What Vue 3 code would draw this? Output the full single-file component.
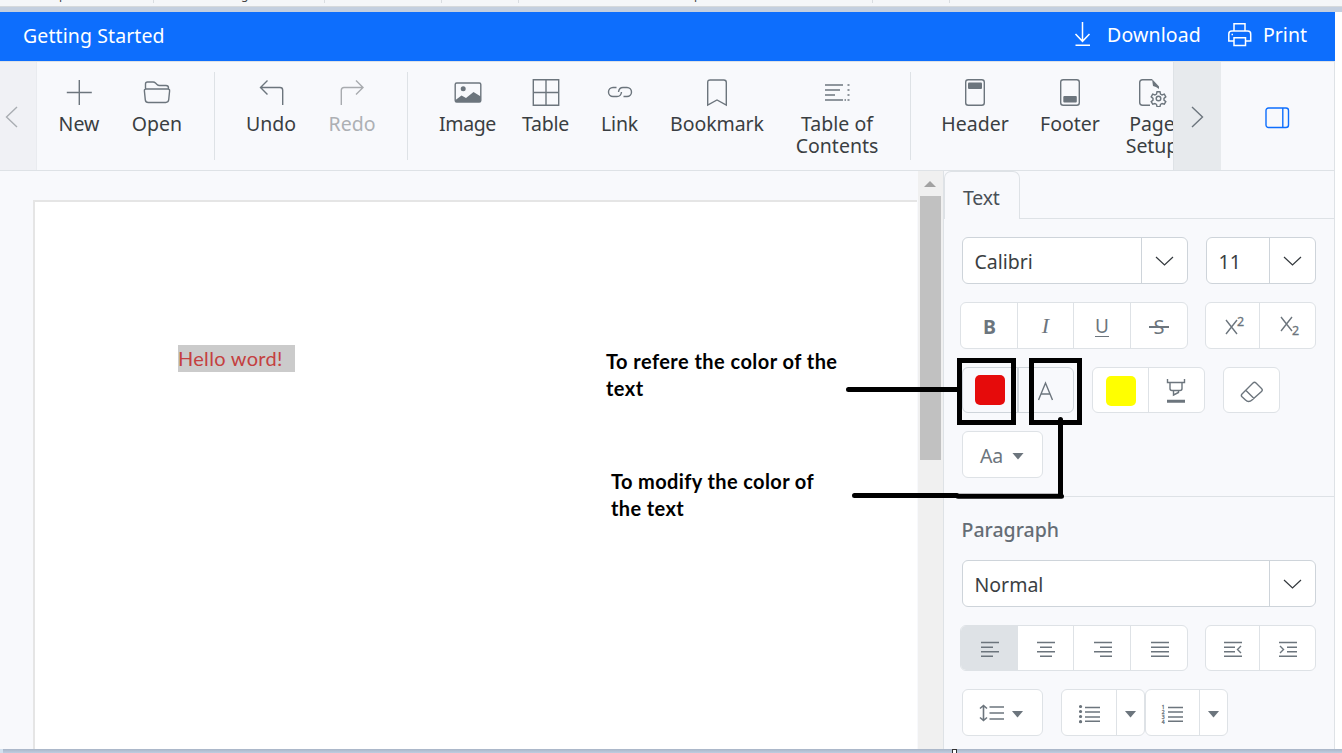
<script setup>
const g = '#6c757d'
const tools = [
  [
    { t: ['New'], w: 76, ls: 0, i: '<path d="M15.3 3v25M2.8 15.5h25"/>' },
    { t: ['Open'], w: 80, ls: 0, i: '<path d="M3.5 12V7q0-2 2-2H11q1.500 0 2.500 1l1.500 1.500q1 1 2.500 1H24q2.500 0 2.500 2.500v1M4 12h22q1.800 0 1.600 2l-.9 8.800q-.3 2.700-3 2.700H6.300q-2.700 0-3-2.700L2.400 14q-.2-2 1.600-2z"/>' },
  ],
  [
    { t: ['Undo'], w: 80, ls: 0, i: '<path d="M11.500 3.500L4.500 10.500l7 7M4.500 10.500H24q2.700 0 2.700 2.700V28"/>' },
    { t: ['Redo'], w: 82, ls: 0, off: true, i: '<path d="M19 3.500l7 7-7 7M26 10.500H7q-2.700 0-2.700 2.700V28"/>' },
  ],
  [
    { t: ['Image'], w: 87, ls: -0.4, i: `<rect x="2.200" y="6" width="25.600" height="19" rx="1.500"/><circle cx="10.200" cy="11.700" r="2.500" fill="${g}" stroke="none"/><path d="M2.500 23l6-4.500 4.500 2.500 7.500-6 7.300 4.500V25H2.500z" fill="${g}" stroke="none"/>` },
    { t: ['Table'], w: 69, ls: -0.2, i: '<path d="M2.300 2.800h25.400v25.400H2.300zM15 2.800v25.400M2.300 15.500h25.400"/>' },
    { t: ['Link'], w: 79, ls: -0.2, i: '<path d="M11.500 10.500H8a4.500 4.500 0 0 0 0 9h4q4 0 4.500-4.500M18.500 19.500h3.500a4.500 4.500 0 0 0 0-9h-4q-4 0-4.500 4.500"/>' },
    { t: ['Bookmark'], w: 116, ls: -0.05, i: '<path d="M5.700 28V5.500q0-2.500 2.500-2.500h13.600q2.500 0 2.500 2.500V28l-9.300-5z"/>' },
    { t: ['Table of', 'Contents'], w: 124, ls: 0, i: '<path d="M3 8h18M3 13h15M3 18h10M3 23h18M22.500 23h1.500M25.500 8h2M25.500 13h2M25.500 18h2M25.500 23h2" stroke-width="1.700"/>' },
  ],
  [
    { t: ['Header'], w: 96, ls: 0, i: `<rect x="5.700" y="2.700" width="18.600" height="25.600" rx="2.500"/><rect x="8" y="5.500" width="14" height="6.500" rx="1" fill="${g}" stroke="none"/>` },
    { t: ['Footer'], w: 94, ls: 0, i: `<rect x="5.700" y="2.700" width="18.600" height="25.600" rx="2.500"/><rect x="8.300" y="19" width="13.500" height="6.500" rx="1" fill="${g}" stroke="none"/>` },
    { t: ['Page', 'Setup'], w: 70, ls: -0.1, i: `<path d="M15 2.800H5.500Q2.700 2.800 2.700 5.500v20q0 2.700 2.800 2.700H13"/><path d="M15 2l7 7.500v2.500q-3-2.500-6-3z" fill="${g}" stroke="none"/><circle cx="21.500" cy="21.500" r="2.300"/><path d="M20 14.800h3l.5 2.300 1.600.9 2.200-.8 1.500 2.600-1.800 1.600v1.700l1.800 1.500-1.500 2.600-2.200-.7-1.600.9-.5 2.200h-3l-.5-2.200-1.600-.9-2.200.7-1.500-2.600 1.800-1.500v-1.700l-1.800-1.600 1.500-2.600 2.200.8 1.600-.9z"/>` },
  ],
]
const aligns = [
  'M1 1.500h18M1 6.200h12M1 10.700h18M1 15.200h12',
  'M1 1.500h18M4 6.200h12M1 10.700h18M4 15.200h12',
  'M1 1.500h18M7 6.200h12M1 10.700h18M7 15.200h12',
  'M1 1.500h18M1 6.200h18M1 10.700h18M1 15.200h18',
]
const marks = [153, 324, 441, 518, 872, 949]
</script>

<template>
  <div class="screen">
    <div class="strip">
      <i v-for="m in marks" :key="m" class="tick" :style="{ left: m + 'px' }"></i>
      <span class="desc d1">p</span>
      <span class="desc d2">g</span>
      <span class="desc d3">p</span>
    </div>
    <div class="band"></div>
    <div class="app">
      <header class="title">
        <span class="name">Getting Started</span>
        <svg class="dl" width="20" height="26" viewBox="0 0 20 26"><path d="M9.500 0v19M2.500 12l7 7.300 7-7.300M2.500 23.300h14.500" /></svg>
        <span class="act download">Download</span>
        <svg class="pr" width="26" height="26" viewBox="0 0 26 26"><path d="M7 9V1.800h11V9M6.500 19H1.800V12q0-3 3-3h15.900q3 0 3 3v7H18.500M7 15.800h11.500v7.700H7zM4.500 12.500h1.500" /></svg>
        <span class="act">Print</span>
      </header>
      <nav class="toolbar">
        <div class="prev"><svg width="14" height="22" viewBox="0 0 14 22"><path d="M12 1L1.500 11 12 21" /></svg></div>
        <div class="tools">
          <div v-for="(grp, n) in tools" :key="n" class="grp">
            <button v-for="b in grp" :key="b.t[0]" class="tool" :class="{ off: b.off }" :style="{ width: b.w + 'px', letterSpacing: b.ls + 'px' }">
              <svg width="30" height="30" viewBox="0 0 30 30" v-html="b.i"></svg>
              <span v-for="l in b.t" :key="l">{{ l }}</span>
            </button>
          </div>
        </div>
        <div class="next"><svg width="14" height="22" viewBox="0 0 14 22"><path d="M2 1l10.500 10L2 21" /></svg></div>
        <div class="pane"><svg width="25" height="22" viewBox="0 0 25 22"><rect x="1" y="1" width="22.500" height="19.500" rx="2.500" /><path d="M17.800 1v19.500" /></svg></div>
      </nav>
      <main class="work">
        <section class="canvas">
          <div class="page"><span class="hello">Hello word!</span></div>
        </section>
        <div class="scroll"><i class="up"></i><i class="thumb"></i></div>
        <aside class="panel">
          <div class="tabs"><div class="tab">Text</div></div>
          <div class="body">
            <div class="row">
              <div class="combo c1"><span>Calibri</span><b><svg width="19" height="11" viewBox="0 0 19 11"><path d="M1 1l8.500 8L18 1" /></svg></b></div>
              <div class="combo c2"><span>11</span><b><svg width="19" height="11" viewBox="0 0 19 11"><path d="M1 1l8.500 8L18 1" /></svg></b></div>
            </div>
            <div class="row wide">
              <div class="group four">
                <button class="bold">B</button><button class="ital">I</button><button class="und"><u>U</u></button>
                <button class="strike"><span>S</span></button>
              </div>
              <div class="group two sup">
                <button><svg width="22" height="22" viewBox="0 0 22 22"><path d="M2 5l11 14M13 5L2 19" /><text x="13" y="10.500">2</text></svg></button>
                <button><svg width="22" height="22" viewBox="0 0 22 22"><path d="M2 2l11 14M13 2L2 16" /><text x="13" y="19.500">2</text></svg></button>
              </div>
            </div>
            <div class="row r3">
              <div class="group font"><button><i class="sw red"></i></button><button class="fa"><svg width="18" height="20" viewBox="0 0 18 20"><path d="M1.500 19L8.500 2 15.500 19M4.300 13h8.500" /></svg></button></div>
              <div class="group hl"><button><i class="sw yellow"></i></button><button><svg class="pen" width="22" height="26" viewBox="0 0 22 26"><path d="M2.500 1v3.500h17V1M5 4.500v6q0 2 2 2h8q2 0 2-2v-6M8.500 12.500V17l5-2.500v-2" /><path d="M2 23.200h18" stroke-width="3" /></svg></button></div>
              <div class="group er"><button><svg class="rub" width="24" height="24" viewBox="0 0 24 24"><path d="M2 14L13 3q1.500-1.500 3 0l5.500 5.500q1.500 1.500 0 3L12 20q-1.500 1.500-3.500 1.500Q7 21.500 5.500 20L2 16.700q-1.300-1.300 0-2.700zM6 10.500l8 8" /></svg></button></div>
            </div>
            <div class="row r4"><div class="group aa"><button><span>Aa</span><i class="car"></i></button></div></div>
          </div>
          <h3>Paragraph</h3>
          <div class="body para">
            <div class="row"><div class="combo c3"><span>Normal</span><b><svg width="19" height="11" viewBox="0 0 19 11"><path d="M1 1l8.500 8L18 1" /></svg></b></div></div>
            <div class="row wide r3 lines">
              <div class="group four"><button v-for="(a, n) in aligns" :key="a" :class="{ on: !n }"><svg width="20" height="17" viewBox="0 0 20 17"><path :d="a" /></svg></button></div>
              <div class="group two">
                <button><svg width="20" height="17" viewBox="0 0 20 17"><path d="M1 1.500h18M1 6.200h11M1 10.700h11M1 15.200h18M18 5l-3.500 3.500L18 12" /></svg></button>
                <button><svg width="20" height="17" viewBox="0 0 20 17"><path d="M1 1.500h18M9 6.200h10M9 10.700h10M1 15.200h18M2 5l3.500 3.500L2 12" /></svg></button>
              </div>
            </div>
            <div class="row">
              <div class="group aa sp"><button><svg width="26" height="18" viewBox="0 0 26 18"><path d="M4.500 1.500v15M1 4.500l3.500-3 3.500 3M1 13.500l3.500 3 3.500-3M10.500 3H25M10.500 9H25M10.500 15H25" stroke-width="1.600" /></svg><i class="car"></i></button></div>
              <div class="group list"><button><svg width="24" height="20" viewBox="0 0 24 20"><path d="M8 3.500h15M8 8h15M8 13h15M8 17.300h15" /><path d="M3.500 2.500h.1M3.500 7.500h.1M3.500 12.500h.1M3.500 17.700h.1" stroke-width="3.200" stroke-linecap="round" /></svg></button><button><i class="car"></i></button></div>
              <div class="group list second"><button><svg width="24" height="20" viewBox="0 0 24 20"><path d="M8 3.500h15M8 8h15M8 13h15M8 17.300h15" /><g class="num"><text x="1.700" y="4.500">1</text><text x="1.700" y="9.500">2</text><text x="1.700" y="14.500">3</text><text x="1.700" y="19.500">4</text></g></svg></button><button><i class="car"></i></button></div>
            </div>
          </div>
        </aside>
      </main>
    </div>
    <footer class="bottom"></footer>
    <svg class="over" width="1342" height="753" viewBox="0 0 1342 753">
      <rect x="959.500" y="360.500" width="54" height="62" />
      <rect x="1031.500" y="360.500" width="48" height="62" />
      <path d="M848.500 389.500H959M854.500 495.500H957M958 496.200H1061.500M1060.500 419.500V495.500" stroke-linecap="round" />
      <rect class="handle" x="952.500" y="749.500" width="4" height="5" />
    </svg>
    <p class="note n1">To refere the color of the<br />text</p>
    <p class="note n2">To modify the color of<br />the text</p>
  </div>
</template>

<style>
body { margin: 0; overflow: hidden; background: #fff; }
</style>
<style scoped>
* { box-sizing: border-box; }
.screen { position: relative; width: 1342px; height: 753px; overflow: hidden; background: #fff; font: 19.5px "Noto Sans", "Open Sans", sans-serif; color: #3a3e42; }
.strip { position: relative; height: 6px; background: #f4f6f8; overflow: hidden; }
.tick { position: absolute; top: 0; width: 1px; height: 3px; background: #d9dde1; }
.desc { position: absolute; top: -13px; font-size: 12px; line-height: 15px; color: #444; }
.d1 { left: 59px; }
.d2 { left: 241px; }
.d3 { left: 694px; }
.band { height: 6px; border-top: 1px solid #d5d9dc; background: #c3cfdf; }
.app { width: 1335px; height: 737px; display: flex; flex-direction: column; border-right: 1px solid #dee2e6; background: #f8f9fc; }
.title { height: 49px; margin-right: -1px; flex: none; display: flex; align-items: center; padding: 0 28px 3px 23px; background: #0d6efd; color: #fff; }
.name { margin-right: auto; letter-spacing: .1px; }
svg { display: block; fill: none; stroke: #6c757d; stroke-width: 1.4; flex: none; }
.title svg { stroke: #fff; stroke-width: 1.5; }
.dl { margin-right: 14px; }
.act { padding-bottom: 2px; }
.download { margin-right: 26px; letter-spacing: .15px; }
.pr { margin-right: 10px; }
.toolbar { height: 110px; flex: none; display: flex; border-top: 1px solid #dee2e6; border-bottom: 1px solid #dee2e6; }
.prev { width: 37px; background: #f0f1f5; border-right: 1px solid #e9ebef; padding: 44px 0 0 5px; }
.prev svg { stroke: #a9adb2; }
.tools { width: 1136px; overflow: hidden; display: flex; padding-left: 4px; }
.grp { flex: none; display: flex; padding-right: 17px; margin-right: 17px; height: 88px; margin-top: 10px; border-right: 1px solid #dee2e6; }
.grp:nth-child(1) { margin-right: 16px; }
.grp:nth-child(2) { padding-right: 14px; margin-right: 16px; }
.grp:nth-child(3) { padding-right: 11px; margin-right: 16px; }
.grp:nth-child(4) { border: 0; }
button { border: 0; background: none; padding: 0; margin: 0; font: inherit; color: inherit; }
.tool { flex: none; display: flex; flex-direction: column; align-items: center; padding-top: 5px; white-space: nowrap; }
.tool span { line-height: 22px; }
.tool svg { margin-bottom: 6px; }
.tool.off { color: #adb0b4; }
.tool.off svg { stroke: #a8abaf; }
.next { width: 48px; background: #e7eaed; border-left: 1px solid #dee2e6; padding: 44px 0 0 16px; }
.pane { padding: 45px 0 0 44px; }
.pane svg { stroke: #0d6efd; }
.work { flex: 1; min-height: 0; display: flex; overflow: hidden; }
.canvas { width: 917px; padding: 29px 0 0 33px; }
.page { height: 560px; border: 2px solid #e5e5e5; border-right: 0; background: #fff; padding: 143px 0 0 143px; }
.hello { display: inline-block; width: 117px; height: 27px; background: #cbcbcb; color: #c44040; font: 20px/27px Lato, sans-serif; white-space: nowrap; letter-spacing: .3px; }
.scroll { width: 26px; background: #f0f0f0; border-left: 1px solid #f8f9fc; padding: 10px 0 0 2px; }
.scroll i { display: block; }
.up { width: 0; height: 0; border: 6px solid transparent; border-top: 0; border-bottom: 6px solid #a2a2a2; margin: 0 0 9px 4px; }
.thumb { width: 21px; height: 264px; background: #c1c1c1; }
.panel { width: 391px; border-left: 1px solid #dee2e6; }
.tabs { height: 48px; border-bottom: 1px solid #dee2e6; }
.tab { width: 76px; height: 48px; border: 1px solid #dee2e6; border-bottom: 0; border-radius: 7px 7px 0 0; background: #f8f9fc; color: #495057; padding-left: 18px; line-height: 52px; letter-spacing: -.2px; }
.body { padding: 18px 0 0 18px; }
.body.para { padding-top: 0; }
.row { display: flex; height: 47px; margin-bottom: 18px; }
.row.wide { margin-left: -2px; }
.row.r3 { height: 46px; }
.combo { display: flex; border: 1px solid #ced4da; border-radius: 6px; background: #fff; }
.combo span { flex: 1; padding-left: 11.5px; line-height: 48px; }
.combo b { width: 46px; border-left: 1px solid #ced4da; padding: 18px 0 0 13px; }
.combo svg { stroke: #33383d; stroke-width: 1.2; }
.c1 { width: 226px; margin-right: 18px; }
.c2 { width: 110px; }
.c3 { width: 354px; }
.group { display: flex; border: 1px solid #dee2e6; border-radius: 6px; background: #fff; color: #6c757d; overflow: hidden; }
.group button { flex: 1; display: flex; align-items: center; justify-content: center; }
.group button + button { border-left: 1px solid #dee2e6; }
.four { width: 228px; margin-right: 17px; }
.group.four button { flex: none; width: 56px; }
.group.four button:nth-child(3) { width: 57px; }
.group.four button:last-child { width: 57px; }
.four .on { background: #dee2e6; }
.two { width: 111px; }
.group.two button:first-child { flex: none; width: 53px; }
.lines svg { margin: 3px 0 0 1px; }
.sup svg { margin: 1px 0 0 4px; }
.two text { font-size: 12.500px; fill: #6c757d; stroke: #6c757d; stroke-width: .3; }
.group .bold { font-weight: 700; padding: 1px 0 0 1px; }
.ital { font-family: "Liberation Serif", serif; font-style: italic; font-size: 22px; }
.und u { text-decoration: none; line-height: 18px; border-bottom: 1.500px solid #6c757d; padding-bottom: 1px; font-size: 19px; margin-top: 2px; }
.group .strike { padding-top: 2px; }
.strike span { position: relative; font-size: 20px; }
.strike span::after { content: ""; position: absolute; left: -5px; right: -5px; top: 13px; height: 1.500px; background: #6c757d; }
.font { width: 112px; margin-right: 18px; background: #f8f9fc; border-color: #ced4da; }
.group.font button + button { border-left: 2px solid #ced4da; }
.group .fa { padding: 1px 0 0 1px; }
.hl { width: 113px; margin-right: 18px; }
.er { width: 57px; }
.pen { margin: 2px 2px 0 0; }
.rub { margin-top: 3px; }
.sw { width: 30px; height: 30px; border-radius: 5px; }
.red { background: #e60b0b; margin: -1px 0 0 1px; }
.yellow { background: #ff0; margin-top: 1px; }
.r4 { margin-bottom: 0; }
.aa { width: 81px; margin-right: 18px; }
.aa span { margin: 2px 9px 0 -1px; letter-spacing: -.2px; }
.sp svg { margin: 1px 7px 0 -3px; }
.car { width: 12px; height: 7px; background: #6c757d; clip-path: polygon(0 0, 100% 0, 50% 100%); margin-top: 3px; }
h3 { margin: 18px 0 0; height: 64px; border-top: 1px solid #dee2e6; padding-left: 17.5px; font-size: 19.500px; font-weight: 500; line-height: 65px; color: #656d75; }
.list { width: 84px; }
.group.list button:last-child { flex: none; width: 28px; }
.list svg { margin: 2px 1px 0 0; }
.list.second { width: 83px; }
.num text { font: 5px "Noto Sans", sans-serif; fill: #6c757d; stroke-width: .3; }
.bottom { height: 4px; background: linear-gradient(#a9b5c7, #bfcde1); border-left: 3px solid #d3e1ef; }
.over { position: absolute; left: 0; top: 0; stroke: #000; stroke-width: 5; }
.over .handle { stroke: #333; fill: #fff; stroke-width: 1; }
.note { position: absolute; margin: 0; color: #000; font: bold 20px/27px Lato, sans-serif; white-space: nowrap; letter-spacing: .45px; }
.n1 { left: 606px; top: 348px; }
.n2 { left: 611px; top: 468px; letter-spacing: .38px; }
</style>
